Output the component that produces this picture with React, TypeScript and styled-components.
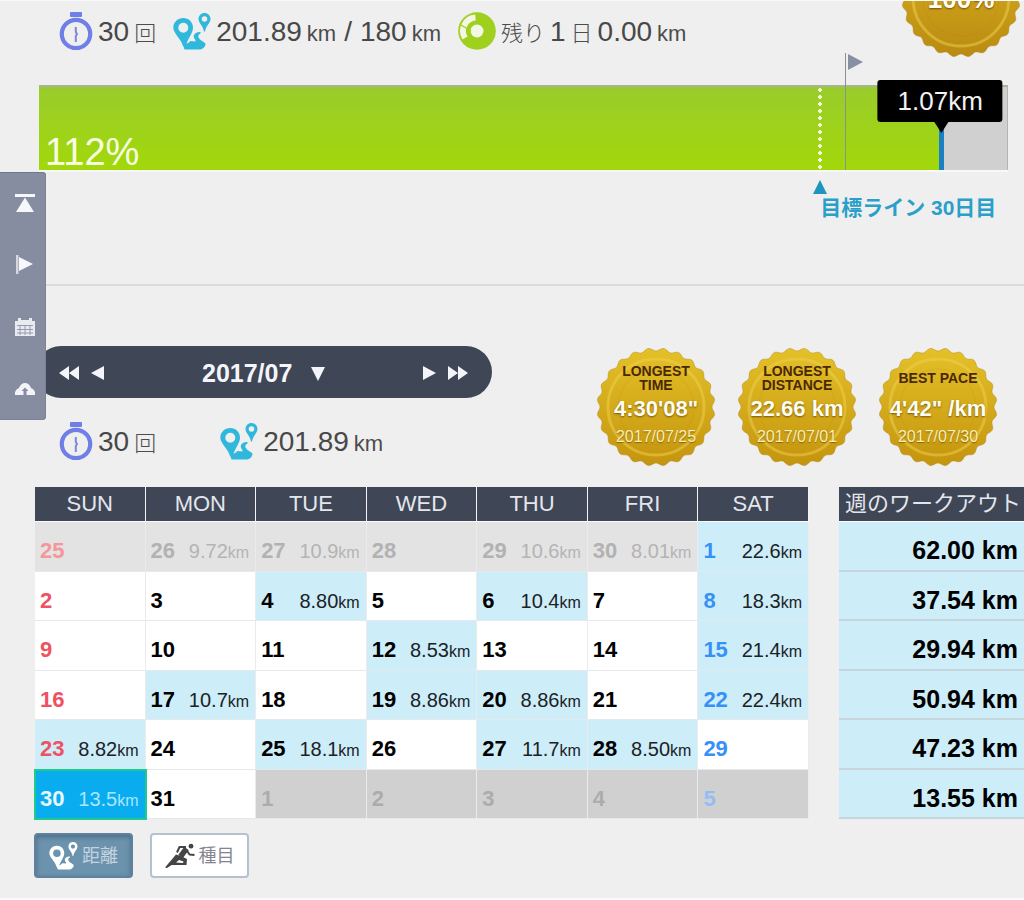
import React from 'react';
import styled, { createGlobalStyle, css } from 'styled-components';

const GlobalStyle = createGlobalStyle`
  *, *::before, *::after { box-sizing: border-box; }
  body {
    margin: 0;
    background: #efefef;
    color: #444;
    font-family: "Liberation Sans", "Noto Sans CJK JP", sans-serif;
  }
  button, select { font: inherit; color: inherit; }
`;

const Page = styled.div`
  position: relative;
  min-height: 100vh;
  overflow: hidden;
  border-top: 1px solid #fafafa;
  border-bottom: 2px solid #fbfbfb;
`;

/* ---------- side navigation ---------- */

const SideNav = styled.nav`
  position: fixed;
  left: 0;
  top: 172px;
  z-index: 5;
  width: 46px;
  display: flex;
  flex-direction: column;
  background: #868da0;
  border-radius: 0 4px 4px 0;
  box-shadow: inset 0 1px 0 #70788c, inset -1px -1px 0 #7c8398;
`;

const NavLink = styled.a`
  height: 62px;
  padding-left: 4px;
  display: flex;
  align-items: center;
  justify-content: center;
`;

/* ---------- statistics ---------- */

const Stats = styled.div<{ $gap: number }>`
  display: flex;
  align-items: center;
  height: 38px;
  gap: ${(p) => p.$gap}px;
  padding-left: 24px;
  white-space: nowrap;
`;

const Stat = styled.div`
  display: flex;
  align-items: center;
  gap: 5px;
`;

const StatText = styled.div`
  display: flex;
  align-items: baseline;
  gap: 5px;
  padding-top: 4px;
  line-height: 32px;
`;

const Num = styled.span`
  font-size: 28px;
  color: #484848;
`;

const Slash = styled(Num)`
  margin: 0 3px;
`;

const Unit = styled.span`
  font-size: 22px;
  color: #4c4c4c;
`;

const Counter = styled(Unit)`
  font-weight: 300;
`;

/* ---------- goal progress ---------- */

const Goal = styled.section`
  position: relative;
  height: 285px;
  padding: 11px 16px 0 35px;
  border-bottom: 2px solid #dcdcdc;
`;

const Track = styled.div`
  position: relative;
  height: 85px;
  margin: 35px 0 0 4px;
  background: #d0d0d0;
  border-top: 2px solid #a9b39a;
  border-right: 1px solid #b4b4b4;
  box-shadow: 0 2px 0 #f8f8f8;
`;

const Fill = styled.div`
  height: 100%;
  padding: 0 6px;
  display: flex;
  align-items: flex-end;
  background: linear-gradient(#99cc2b, #a2d80a);
  background-clip: padding-box;
  border-right: 5px solid #1b7fc4;
`;

const Percent = styled.span`
  font-size: 38px;
  line-height: 36px;
  color: #f7ffe0;
`;

const Marker = styled.div`
  position: absolute;
  top: 0;
  bottom: 0;
  width: 0;
`;

const TargetLine = styled.div`
  height: 100%;
  width: 4px;
  margin-left: -2px;
  background: radial-gradient(circle at 2px 3px, #f4fbd5 2px, transparent 2px) 0 0 / 4px 7px;
`;

const TargetLabel = styled.div`
  margin-top: 9px;
  color: #2a9fca;
  font-size: 21px;
  font-weight: 700;
  line-height: 26px;
  white-space: nowrap;

  svg { display: block; margin-left: -7px; }
`;

const FlagPole = styled.div`
  position: absolute;
  top: -34px;
  bottom: 0;
  left: 0;
  border-left: 1px solid #8a9099;
  svg { display: block; margin-left: 2px; }
`;

const Tooltip = styled.div`
  position: absolute;
  left: 0;
  top: -7px;
  transform: translateX(-50%);
  padding: 0 20px;
  border-radius: 3px;
  background: #000;
  color: #f2f2f2;
  font-size: 26px;
  line-height: 42px;

  &::after {
    content: "";
    position: absolute;
    top: 100%;
    left: 50%;
    margin-left: -6px;
    border: 7px solid transparent;
    border-top: 11px solid #000;
    border-bottom: 0;
  }
`;

/* ---------- medals ---------- */

const MedalBox = styled.div`
  display: grid;
  width: 120px;
  height: 120px;
  justify-items: center;
  > * { grid-area: 1 / 1; }
`;

const MedalFace = styled.div`
  z-index: 1;
  display: flex;
  flex-direction: column;
  align-items: center;
  padding-top: 17px;
  text-align: center;
  white-space: nowrap;
`;

const MedalTitle = styled.div`
  height: 28px;
  display: flex;
  flex-direction: column;
  justify-content: center;
  color: #4a2806;
  font-size: 14px;
  font-weight: 700;
  line-height: 14px;
  white-space: pre-line;
`;

const MedalValue = styled.div`
  margin-top: 4px;
  color: #fffdf4;
  font-size: 22px;
  font-weight: 700;
  line-height: 26px;
  text-shadow: 0 1px 2px rgba(90, 60, 0, 0.75);
`;

const MedalDate = styled.div`
  margin-top: 6px;
  color: #fbf0b4;
  font-size: 16px;
  line-height: 18px;
  text-shadow: 0 1px 1px rgba(90, 60, 0, 0.6);
`;

const GoalMedal = styled.div`
  position: absolute;
  right: 3px;
  top: -63px;
`;

const GoalMedalText = styled.div`
  z-index: 1;
  padding-top: 46px;
  color: #fffdf4;
  font-size: 26px;
  font-weight: 700;
  line-height: 30px;
  text-shadow: 0 1px 2px rgba(90, 60, 0, 0.8);
`;

/* ---------- month ---------- */

const Month = styled.section`
  padding: 60px 0 0 35px;
`;

const MonthTop = styled.div`
  display: flex;
  justify-content: space-between;
  align-items: flex-end;
  padding-right: 26px;
`;

const MonthLeft = styled.div`
  flex: 0 0 457px;
  align-self: flex-start;
`;

const MonthBar = styled.div`
  display: flex;
  align-items: center;
  justify-content: space-between;
  height: 52px;
  margin-bottom: 24px;
  padding: 2px 24px 0;
  border-radius: 26px;
  background: #3f4655;
`;

const ArrowGroup = styled.div`
  display: flex;
  gap: 12px;
`;

const ArrowButton = styled.button`
  display: flex;
  padding: 0;
  border: 0;
  background: none;
  cursor: pointer;
`;

const MonthPicker = styled.label`
  display: flex;
  align-items: center;
  gap: 18px;
`;

const MonthSelect = styled.select`
  appearance: none;
  padding: 0;
  border: 0;
  background: none;
  color: #f4f5fa;
  font-size: 25px;
  font-weight: 700;
  line-height: 30px;
`;

const Medals = styled.div`
  display: flex;
  gap: 21px;
  padding-top: 1px;
`;

/* ---------- calendar ---------- */

const Tables = styled.div`
  display: grid;
  grid-template-columns: 774fr 185fr;
  gap: 30px;
  margin-top: 20px;
`;

const tableBase = css`
  width: 100%;
  height: 332px;
  table-layout: fixed;
  border-collapse: separate;
  border-spacing: 0;
`;

const CalendarTable = styled.table`
  ${tableBase}
`;

const WeekTable = styled.table`
  ${tableBase}
`;

const HeadCell = styled.th`
  height: 35px;
  padding: 0;
  background: #3f4655;
  border-right: 1px solid #f4f4f4;
  border-bottom: 1px solid #fafafa;
  color: #e4e6ee;
  font-size: 22px;
  font-weight: 400;
  line-height: 30px;
  white-space: nowrap;
`;

const WeekHeadCell = styled(HeadCell)`
  padding-left: 6px;
  border-right: 0;
  text-align: left;
`;

type Kind = 'plain' | 'run' | 'prev' | 'next' | 'today';

const cellBg: Record<Kind, string> = {
  plain: '#fff',
  run: '#cdedf9',
  prev: '#e3e3e3',
  next: '#d0d0d0',
  today: '#0aacf0',
};

const DayCell = styled.td<{ $kind: Kind }>`
  padding: 10px 6px 0 5px;
  background: ${(p) => cellBg[p.$kind]};
  border-right: 1px solid #ebebee;
  border-bottom: 1px solid #e6e9ec;
  ${(p) => p.$kind === 'today' && css`
    border-color: #0aacf0;
    outline: 2px solid #1fcb8c;
    outline-offset: -1px;
  `}
`;

const DayLine = styled.div`
  display: flex;
  justify-content: space-between;
  align-items: baseline;
  height: 26px;
  line-height: 26px;
`;

const dayColor = (kind: Kind, col: number): string => {
  if (kind === 'today') return '#e6f8ff';
  if (kind === 'prev') return col === 0 ? '#f5969b' : '#b2b2b2';
  if (kind === 'next') return col === 6 ? '#94bdf3' : '#acacac';
  if (col === 0) return '#ee5261';
  if (col === 6) return '#3691f7';
  return '#000';
};

const distColor: Record<Kind, string> = {
  plain: '#111',
  run: '#1b2226',
  prev: '#b4b4b4',
  next: '#acacac',
  today: '#a9e6ff',
};

const DayNumber = styled.span<{ $color: string }>`
  color: ${(p) => p.$color};
  font-size: 22px;
  font-weight: 700;
`;

const Distance = styled.span<{ $kind: Kind }>`
  color: ${(p) => distColor[p.$kind]};
  font-size: 20px;
  small { font-size: 16px; }
`;

const WeekCell = styled.td`
  padding: 9px 6px 0 0;
  background: #cdedf9;
  border-bottom: 2px solid #c6d5db;
  color: #000;
  font-size: 25px;
  font-weight: 700;
  line-height: 26px;
  text-align: right;
`;

/* ---------- view switch ---------- */

const Modes = styled.div`
  display: flex;
  gap: 17px;
  margin: 14px 0 18px -1px;
`;

const ModeButton = styled.button<{ $active?: boolean }>`
  display: flex;
  align-items: center;
  justify-content: center;
  gap: 4px;
  width: 99px;
  height: 45px;
  padding: 0;
  border: 2px solid ${(p) => (p.$active ? '#5e829d' : '#b4c2d0')};
  border-radius: 4px;
  background: ${(p) => (p.$active ? '#6c93ae' : '#fff')};
  box-shadow: ${(p) => (p.$active ? 'inset 0 2px 5px rgba(40, 70, 95, 0.5)' : 'none')};
  color: ${(p) => (p.$active ? '#c3d3df' : '#85858f')};
  font-size: 18px;
  line-height: 24px;
`;

/* ---------- drawings ---------- */

const Stopwatch = () => (
  <svg width="34" height="38" viewBox="0 0 34 38" fill="none" aria-hidden="true">
    <path d="M12 0h10q1 0 1 1v3q0 1-1 1H12q-1 0-1-1V1q0-1 1-1z" fill="#6f7fe6" />
    <circle cx="17" cy="22" r="14.2" stroke="#6f7fe6" strokeWidth="4.2" />
    <path d="M16.8 15v5l1.2 2-1.2 2v6" stroke="#7b88dc" strokeWidth="2" />
  </svg>
);

const Route = ({ color, width = 38 }: { color: string; width?: number }) => (
  <svg width={width} height={Math.round((width * 37) / 38)} viewBox="0 0 38 37" aria-hidden="true">
    <path
      fill={color}
      fillRule="evenodd"
      d="M10.3 5C15.8 5 20 9.200 20 14.500C20 20.500 15 24.500 12.500 34L10 33C8 25.500.3 20.500.3 14.500C.3 9.200 4.800 5 10.300 5zM10.300 9.800A5 5 0 1 0 10.300 19.800A5 5 0 1 0 10.300 9.800z"
    />
    <path
      fill={color}
      fillRule="evenodd"
      d="M31.500 0C35 0 37.500 2.700 37.500 6C37.500 10 33 12.500 32 18.500H31C30 12.500 25.500 10 25.500 6C25.500 2.700 28 0 31.500 0zM31.500 3.200A2.800 2.800 0 1 0 31.500 8.800A2.800 2.800 0 1 0 31.500 3.200z"
    />
    <path
      fill={color}
      d="M9 29L11.500 36.500H26.500C29.500 36.500 32.500 34 32.500 30.500C31 28.500 27 27.500 25.500 24.500C25 22.500 25.500 21.500 27.500 20.500V19C23.500 19 20.500 20.500 20.800 24C21 26 23 26.500 22.500 28.500L17.500 28C16 29.500 14.500 30.500 12.500 31z"
    />
  </svg>
);

const Remaining = () => (
  <svg width="38" height="40" viewBox="0 0 38 40" fill="none" aria-hidden="true">
    <circle cx="19" cy="20" r="18.8" fill="#9fd01d" />
    <circle cx="19" cy="20" r="6.5" fill="#f4f7e4" />
    <path d="M17.5 6.500A13.500 13.500 0 0 0 7 27" stroke="#f4f7e4" strokeWidth="6" />
    <path d="M3 14L13 20" stroke="#9fd01d" strokeWidth="1.2" />
  </svg>
);

const Runner = () => (
  <svg width="30" height="25" viewBox="0 0 30 25" fill="none" stroke="#444" strokeLinejoin="round" aria-hidden="true">
    <circle cx="26" cy="3.2" r="2.4" fill="#444" stroke="none" />
    <path d="M0 24.500L11 11.500L17 13.500L22 16L21.500 22H6.500L2 25z" fill="#444" stroke="none" />
    <path d="M11 19.500L14 17L18.500 18.500L18 20z" fill="#fff" stroke="none" />
    <path d="M12 9.500L14.500 4L21 4" strokeWidth="2" />
    <path d="M21.500 5.500L15.500 13.500" strokeWidth="5.500" />
    <path d="M21.500 7L24.500 11.500L29.500 12" strokeWidth="2" />
  </svg>
);

const MEDAL_PATH = (() => {
  const points: string[] = [];
  const steps = 288;
  for (let i = 0; i < steps; i += 1) {
    const a = (i / steps) * Math.PI * 2;
    const r = 57.5 - 1.5 * Math.cos(24 * a);
    points.push(`${(60 + r * Math.sin(a)).toFixed(2)} ${(60 - r * Math.cos(a)).toFixed(2)}`);
  }
  return `M${points.join('L')}z`;
})();

const MedalShape = ({ id, top, bottom }: { id: string; top: string; bottom: string }) => (
  <svg width="120" height="120" viewBox="0 0 120 120" aria-hidden="true">
    <defs>
      <linearGradient id={id} x1="0" y1="0" x2="0" y2="1">
        <stop offset="0" stopColor={top} />
        <stop offset="1" stopColor={bottom} />
      </linearGradient>
    </defs>
    <path d={MEDAL_PATH} fill={`url(#${id})`} stroke="#b58a1c" strokeOpacity="0.5" />
    <circle cx="60" cy="60" r="48" fill="none" stroke="#f0d050" strokeOpacity="0.5" strokeWidth="3" />
    <circle cx="60" cy="60" r="38" fill="none" stroke="#a87b08" strokeOpacity="0.15" strokeWidth="1" />
  </svg>
);

const Triangles = ({ count, left }: { count: 1 | 2; left?: boolean }) => {
  const width = count === 2 ? 20 : 13;
  const d = count === 2 ? 'M0 0L10 7L0 14zM10 0L20 7L10 14z' : 'M0 0L13 7L0 14z';
  return (
    <svg width={width} height="14" viewBox={`0 0 ${width} 14`} aria-hidden="true">
      <path d={d} fill="#f4f5fa" transform={left ? `rotate(180 ${width / 2} 7)` : undefined} />
    </svg>
  );
};

/* ---------- data ---------- */

type Day = [day: number, kind: Kind, distance?: string];

const weekdays = ['SUN', 'MON', 'TUE', 'WED', 'THU', 'FRI', 'SAT'];

const weeks: Day[][] = [
  [[25, 'prev'], [26, 'prev', '9.72'], [27, 'prev', '10.9'], [28, 'prev'], [29, 'prev', '10.6'], [30, 'prev', '8.01'], [1, 'run', '22.6']],
  [[2, 'plain'], [3, 'plain'], [4, 'run', '8.80'], [5, 'plain'], [6, 'run', '10.4'], [7, 'plain'], [8, 'run', '18.3']],
  [[9, 'plain'], [10, 'plain'], [11, 'plain'], [12, 'run', '8.53'], [13, 'plain'], [14, 'plain'], [15, 'run', '21.4']],
  [[16, 'plain'], [17, 'run', '10.7'], [18, 'plain'], [19, 'run', '8.86'], [20, 'run', '8.86'], [21, 'plain'], [22, 'run', '22.4']],
  [[23, 'run', '8.82'], [24, 'plain'], [25, 'run', '18.1'], [26, 'plain'], [27, 'run', '11.7'], [28, 'run', '8.50'], [29, 'plain']],
  [[30, 'today', '13.5'], [31, 'plain'], [1, 'next'], [2, 'next'], [3, 'next'], [4, 'next'], [5, 'next']],
];

const weekTotals = ['62.00', '37.54', '29.94', '50.94', '47.23', '13.55'];

const medals = [
  { title: 'LONGEST\nTIME', value: `4:30'08"`, date: '2017/07/25' },
  { title: 'LONGEST\nDISTANCE', value: '22.66 km', date: '2017/07/01' },
  { title: 'BEST PACE', value: `4'42" /km`, date: '2017/07/30' },
];

const progress = { fill: 93.5, target: 80.7, goal: 83.3, current: 93.1 };

export default function App() {
  return (
    <>
      <GlobalStyle />
      <Page>
        <SideNav>
          <NavLink href="#top" aria-label="Top">
            <svg width="20" height="20" viewBox="0 0 20 20" fill="#f6f7fb">
              <path d="M0 1h20v3H0zM10 4.500L19 19H1z" />
            </svg>
          </NavLink>
          <NavLink href="#goal" aria-label="Goal">
            <svg width="18" height="20" viewBox="0 0 18 20" fill="#f6f7fb">
              <path d="M0 0h2.500v19H0z" opacity="0.7" />
              <path d="M3 2L17 9L3 16z" />
            </svg>
          </NavLink>
          <NavLink href="#calendar" aria-label="Calendar">
            <svg width="20" height="20" viewBox="0 0 20 20">
              <path d="M0 4h3V1h3v2h8V1h3v3h3v15H0z" fill="#e9ebf1" />
              <path d="M2 8.500h16M2 12.500h16M2 16h16M5 8v10M10 8v10M15 8v10" stroke="#969caf" strokeWidth="1" />
            </svg>
          </NavLink>
          <NavLink href="#upload" aria-label="Upload">
            <svg width="20" height="14" viewBox="0 0 20 14">
              <path d="M0 13V10Q1 7 4 6Q6 1 10 1Q14 1 16 6Q19 7 20 10V13z" fill="#f3f4f8" />
              <path d="M8.500 13.500V9H6.500L10 5.500L13.500 9H11.500V13.500z" fill="#868da0" />
            </svg>
          </NavLink>
        </SideNav>

        <Goal id="goal">
          <Stats $gap={17}>
            <Stat>
              <Stopwatch />
              <StatText><Num>30</Num><Counter>回</Counter></StatText>
            </Stat>
            <Stat>
              <Route color="#30b8dc" />
              <StatText>
                <Num>201.89</Num><Unit>km</Unit><Slash>/</Slash><Num>180</Num><Unit>km</Unit>
              </StatText>
            </Stat>
            <Stat>
              <Remaining />
              <StatText>
                <Counter>残り</Counter><Num>1</Num><Counter>日</Counter><Num>0.00</Num><Unit>km</Unit>
              </StatText>
            </Stat>
          </Stats>

          <GoalMedal>
            <MedalBox>
              <MedalShape id="goal-medal" top="#dcb41e" bottom="#b98a12" />
              <GoalMedalText>100%</GoalMedalText>
            </MedalBox>
          </GoalMedal>

          <Track>
            <Fill style={{ width: `${progress.fill}%` }}>
              <Percent>112%</Percent>
            </Fill>
            <Marker style={{ left: `${progress.target}%` }}>
              <TargetLine />
              <TargetLabel>
                <svg width="14" height="16" viewBox="0 0 14 16" aria-hidden="true">
                  <path d="M7 1L14 15H0z" fill="#1f94bd" />
                </svg>
                目標ライン 30日目
              </TargetLabel>
            </Marker>
            <Marker style={{ left: `${progress.goal}%` }}>
              <FlagPole>
                <svg width="15" height="18" viewBox="0 0 15 18" aria-hidden="true">
                  <path d="M0 1L15 9L0 17z" fill="#8890a3" />
                </svg>
              </FlagPole>
            </Marker>
            <Marker style={{ left: `${progress.current}%` }}>
              <Tooltip role="status">1.07km</Tooltip>
            </Marker>
          </Track>
        </Goal>

        <Month id="calendar">
          <MonthTop>
            <MonthLeft>
              <MonthBar>
                <ArrowGroup>
                  <ArrowButton aria-label="Previous year"><Triangles count={2} left /></ArrowButton>
                  <ArrowButton aria-label="Previous month"><Triangles count={1} left /></ArrowButton>
                </ArrowGroup>
                <MonthPicker>
                  <MonthSelect aria-label="Month" defaultValue="2017/07">
                    <option>2017/07</option>
                  </MonthSelect>
                  <svg width="14" height="16" viewBox="0 0 14 16" aria-hidden="true">
                    <path d="M0 2H14L7 16z" fill="#f4f5fa" />
                  </svg>
                </MonthPicker>
                <ArrowGroup>
                  <ArrowButton aria-label="Next month"><Triangles count={1} /></ArrowButton>
                  <ArrowButton aria-label="Next year"><Triangles count={2} /></ArrowButton>
                </ArrowGroup>
              </MonthBar>
              <Stats $gap={64}>
                <Stat>
                  <Stopwatch />
                  <StatText><Num>30</Num><Counter>回</Counter></StatText>
                </Stat>
                <Stat>
                  <Route color="#30b8dc" />
                  <StatText><Num>201.89</Num><Unit>km</Unit></StatText>
                </Stat>
              </Stats>
            </MonthLeft>
            <Medals>
              {medals.map((m, i) => (
                <MedalBox key={m.date}>
                  <MedalShape id={`medal-${i}`} top="#e4c128" bottom="#c4940e" />
                  <MedalFace>
                    <MedalTitle>{m.title}</MedalTitle>
                    <MedalValue>{m.value}</MedalValue>
                    <MedalDate>{m.date}</MedalDate>
                  </MedalFace>
                </MedalBox>
              ))}
            </Medals>
          </MonthTop>

          <Tables>
            <CalendarTable>
              <thead>
                <tr>
                  {weekdays.map((d) => <HeadCell key={d} scope="col">{d}</HeadCell>)}
                </tr>
              </thead>
              <tbody>
                {weeks.map((week, w) => (
                  <tr key={w}>
                    {week.map(([day, kind, distance], col) => (
                      <DayCell key={col} $kind={kind}>
                        <DayLine>
                          <DayNumber $color={dayColor(kind, col)}>{day}</DayNumber>
                          {distance && <Distance $kind={kind}>{distance}<small>km</small></Distance>}
                        </DayLine>
                      </DayCell>
                    ))}
                  </tr>
                ))}
              </tbody>
            </CalendarTable>
            <WeekTable>
              <thead>
                <tr><WeekHeadCell scope="col">週のワークアウト</WeekHeadCell></tr>
              </thead>
              <tbody>
                {weekTotals.map((t) => (
                  <tr key={t}><WeekCell>{t} km</WeekCell></tr>
                ))}
              </tbody>
            </WeekTable>
          </Tables>

          <Modes>
            <ModeButton $active aria-pressed="true"><Route color="#fff" width={29} />距離</ModeButton>
            <ModeButton aria-pressed="false"><Runner />種目</ModeButton>
          </Modes>
        </Month>
      </Page>
    </>
  );
}
